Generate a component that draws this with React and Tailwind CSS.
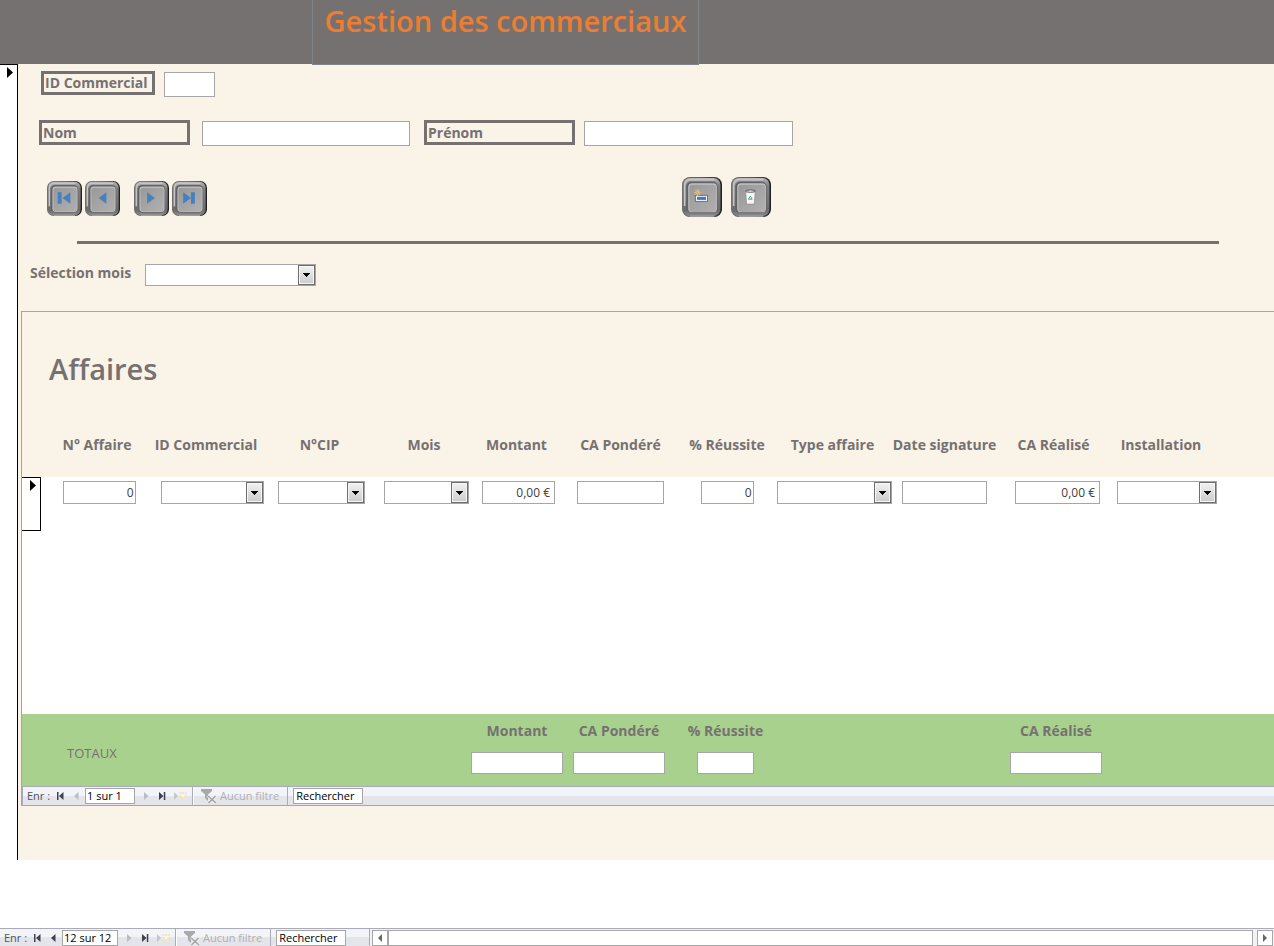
import { useId } from 'react';

const columns = [
  { name: 'N° Affaire', col: 'w-[116px]', field: 'w-[73px]', value: '0', head: 'pr-1' },
  { name: 'ID Commercial', col: 'w-[110px]', field: 'w-[103px]', select: true, head: 'pr-3' },
  { name: 'N°CIP', col: 'w-[109px]', field: 'w-[87px]', select: true, head: 'pr-1' },
  { name: 'Mois', col: 'w-[100px]', field: 'w-[85px]', select: true, head: 'pr-1' },
  { name: 'Montant', col: 'w-[85px]', field: 'w-[73px]', value: '0,00 €', pad: 'pr-1', head: 'pr-1', total: 'w-[92px]' },
  { name: 'CA Pondéré', col: 'w-[119px]', field: 'w-[87px]', value: '', total: 'w-[92px]' },
  { name: '% Réussite', col: 'w-[94px]', field: 'w-[53px]', value: '0', total: 'w-[57px]' },
  { name: 'Type affaire', col: 'w-[121px]', field: 'w-[115px]', select: true, head: 'pr-1' },
  { name: 'Date signature', col: 'w-[99px]', field: 'w-[85px]', value: '' },
  { name: 'CA Réalisé', col: 'w-[127px]', field: 'w-[85px]', value: '0,00 €', pad: 'pr-1', head: 'pr-2', total: 'w-[92px]' },
  { name: 'Installation', col: 'w-[92px]', field: 'w-[100px]', select: true, head: 'pr-3' },
];

function Combo({ id, label, className }) {
  return (
    <span className={`relative block shrink-0 ${className}`}>
      <select
        id={id}
        aria-label={label}
        className="block h-full w-full appearance-none border border-[#a6a6a6] bg-white pl-1 pr-5 text-xs text-[#404040] outline-none"
      >
        <option value=""></option>
      </select>
      <span className="pointer-events-none absolute inset-y-px right-px flex w-[17px] items-center justify-center border border-[#6e6e6e] bg-linear-to-b from-[#f2f2f2] to-[#cbcbcb] shadow-[inset_0_0_0_1px_#f6f6f6]">
        <svg width="7" height="4" viewBox="0 0 7 4" shapeRendering="crispEdges">
          <path d="M0 0h7v1h-1v1h-1v1h-1v1h-1v-1h-1v-1h-1v-1h-1z" fill="#000" />
        </svg>
      </span>
    </span>
  );
}

function MetalButton({ label, size, children }) {
  const id = useId();
  return (
    <button type="button" aria-label={label} className={`block shrink-0 ${size}`}>
      <svg viewBox="0 0 36 36" className="h-full w-full">
        <defs>
          <linearGradient id={`${id}a`} x1="0" y1="0" x2="1" y2="0">
            <stop offset="0" stopColor="#6f6f6f" />
            <stop offset="0.5" stopColor="#5a5a5a" />
            <stop offset="1" stopColor="#202020" />
          </linearGradient>
          <linearGradient id={`${id}b`} x1="0" y1="0" x2="0" y2="1">
            <stop offset="0" stopColor="#b9b9b9" />
            <stop offset="0.2" stopColor="#808080" />
            <stop offset="0.85" stopColor="#6c6c6c" />
            <stop offset="1" stopColor="#8c8c8c" />
          </linearGradient>
          <linearGradient id={`${id}c`} x1="0" y1="0" x2="1" y2="1">
            <stop offset="0" stopColor="#999999" />
            <stop offset="1" stopColor="#b0b0b0" />
          </linearGradient>
        </defs>
        <rect width="36" height="36" rx="7" fill={`url(#${id}a)`} />
        <rect x="1" y="0.8" width="33.6" height="34.4" rx="6.2" fill={`url(#${id}b)`} />
        <path d="M2.4 26V8Q2.400 2.400 8 2.400H29" fill="none" stroke="#c4c4c4" strokeWidth="1.500" />
        <path d="M7 35.300h22" stroke="#b0b0b0" strokeWidth="1" />
        <rect x="4" y="4" width="28" height="28.400" rx="4.500" fill="#626262" />
        <rect x="5.600" y="5.600" width="25.800" height="26.200" rx="3.500" fill="#c2c2c2" />
        <rect x="6.600" y="7" width="24" height="24.400" rx="2.500" fill={`url(#${id}c)`} />
        {children}
      </svg>
    </button>
  );
}

function NavIcon({ kind, off }) {
  const fill = off ? '#b9bcc2' : '#3c4250';
  return (
    <svg width="14" height="12" viewBox="0 0 14 12" className="mx-auto block">
      {kind === 'first' && <path d="M4 2h1.500v8H4zM10.500 2v8L6 6z" fill={fill} />}
      {kind === 'prev' && <path d="M9.500 2v8L5 6z" fill={fill} />}
      {kind === 'next' && <path d="M5 2v8l4.500-4z" fill={fill} />}
      {kind === 'last' && <path d="M4 2v8l4.500-4zM8.800 2h1.500v8H8.800z" fill={fill} />}
      {kind === 'new' && (
        <>
          <path d="M0 2v8l4-4z" fill="#c3c6cb" />
          <path d="M5.500 3h7M5.500 6h7M5.500 9h7" stroke="#f3e6b8" strokeWidth="2" strokeDasharray="1.800 0.800" />
          <path d="M8 5h2v2H8z" fill="#fdf8e4" />
        </>
      )}
    </svg>
  );
}

function NavButton({ kind, label, off, wide }) {
  return (
    <button type="button" aria-label={label} disabled={off} className={wide ? 'w-[22px]' : 'w-4'}>
      <NavIcon kind={kind} off={off} />
    </button>
  );
}

function RecordNav({ position, positionWidth, prevOff, className, children }) {
  return (
    <div className={`box-content flex items-stretch border-t border-[#a9abb8] bg-linear-to-b from-[#f3f4f7] from-50% to-[#e4e5ea] to-50% text-[11px] leading-4 text-[#4d5160] ${className}`}>
      <div className="flex items-center pl-1">
        <span className="w-[25px]">Enr :</span>
        <NavButton kind="first" label="Premier enregistrement" />
        <NavButton kind="prev" label="Enregistrement précédent" off={prevOff} />
        <input
          aria-label="Enregistrement actif"
          defaultValue={position}
          className={`mr-[3px] ml-px h-4 border border-[#a6a6a6] bg-white pb-px pl-px text-[11px] leading-3 text-black outline-none ${positionWidth}`}
        />
        <NavButton kind="next" label="Enregistrement suivant" off />
        <NavButton kind="last" label="Dernier enregistrement" />
        <NavButton kind="new" label="Nouvel enregistrement" off wide />
      </div>
      <button type="button" disabled className="flex items-center gap-[3px] border-x border-[#a9abb8] px-2 text-[#b0b0b0] shadow-[inset_1px_0_0_#fff]">
        <svg width="16" height="16" viewBox="0 0 16 16">
          <path d="M0 1h11v2L7 6.500V13L4 10V6.500L0 3z" fill="#a9a9a9" />
          <path d="M7 7.500l8 7.500M14.500 7.500L7.500 15" stroke="#f0f1f4" strokeWidth="3.500" />
          <path d="M7 8l8 7M14.500 8L7.500 15" stroke="#a5a5a5" strokeWidth="1.600" />
        </svg>
        Aucun filtre
      </button>
      <div className="flex items-center px-[5px]">
        <input
          aria-label="Rechercher"
          defaultValue="Rechercher"
          className="h-4 w-[70px] border border-[#a6a6a6] bg-white pb-px pl-0.5 text-[11px] leading-3 text-black outline-none"
        />
      </div>
      {children}
    </div>
  );
}

function Marker() {
  return (
    <svg width="6" height="11" viewBox="0 0 6 11" className="block">
      <path d="M0 0L6 5.500L0 11z" fill="#000" />
    </svg>
  );
}

function Affaires() {
  return (
    <section className="ml-[3px] border border-r-0 border-[#a6a6a6]">
      <h2 className="pt-9 pl-[27px] text-[29px] leading-[42px] font-semibold text-[#767171]">Affaires</h2>
      <table className="w-full table-fixed border-collapse">
        <colgroup>
          <col className="w-[19px]" />
          {columns.map((c) => (
            <col key={c.name} className={c.col} />
          ))}
          <col />
        </colgroup>
        <thead>
          <tr className="h-[87px] align-top text-sm leading-5 text-[#767171]">
            <td />
            {columns.map((c) => (
              <th key={c.name} className="pt-[45px] font-bold">
                <span className={`flex justify-center whitespace-nowrap ${c.head || ''}`}>{c.name}</span>
              </th>
            ))}
            <td />
          </tr>
        </thead>
        <tbody className="bg-white">
          <tr className="h-[54px] align-top">
            <td>
              <div className="h-[54px] border border-l-0 border-black pt-0.5 pl-2">
                <Marker />
              </div>
            </td>
            {columns.map((c) => (
              <td key={c.name} className="pt-1">
                <div className="flex justify-center">
                  {c.select ? (
                    <Combo label={c.name} className={`h-[23px] ${c.field}`} />
                  ) : (
                    <input
                      aria-label={c.name}
                      defaultValue={c.value}
                      className={`h-[23px] shrink-0 border border-[#a6a6a6] bg-white pb-px text-right text-xs text-[#404040] outline-none ${c.field} ${c.pad || 'pr-px'}`}
                    />
                  )}
                </div>
              </td>
            ))}
            <td />
          </tr>
          <tr className="h-[183px]">
            <td colSpan={columns.length + 2} />
          </tr>
        </tbody>
        <tfoot className="bg-[#a9d18e] text-sm leading-5 text-[#767171]">
          <tr className="h-[72px] align-top">
            <td />
            <th className="pt-[29px] pl-[26px] text-left text-[13px] leading-5 font-normal">TOTAUX</th>
            {columns.slice(1).map((c) => (
              <td key={c.name} className="pt-[7px]">
                {c.total && (
                  <label className="flex flex-col items-center gap-[11px] pr-[3px] font-bold whitespace-nowrap">
                    {c.name}
                    <input className={`block h-[22px] shrink-0 border border-[#a6a6a6] bg-white outline-none ${c.total}`} />
                  </label>
                )}
              </td>
            ))}
            <td />
          </tr>
        </tfoot>
      </table>
      <RecordNav position="1 sur 1" positionWidth="w-[50px]" prevOff className="h-[18px] border-l" />
    </section>
  );
}

const labelBox = 'border-3 border-[#767171] px-px text-sm font-bold whitespace-nowrap text-[#767171]';
const textBox = 'mt-px h-[25px] border border-[#a6a6a6] bg-white px-1 text-xs text-[#404040] outline-none';

export default function App() {
  return (
    <div className="flex min-h-screen flex-col bg-white font-['Open_Sans','Noto_Sans',sans-serif]">
      <header className="h-16 bg-[#767171]">
        <h1 className="relative ml-[312px] h-[65px] w-[387px] border border-t-0 border-[#808488] bg-[#767171] text-center text-[29px] leading-[42px] font-semibold whitespace-nowrap text-[#ed7d31]">
          Gestion des commerciaux
        </h1>
      </header>

      <main className="flex">
        <div className="w-[18px] shrink-0 border-t border-r border-black pt-0.5 pl-[7px]">
          <Marker />
        </div>

        <div className="min-w-0 flex-1 bg-[#faf3e8] pt-[7px] pb-[54px]">
          <div className="flex items-start pl-[23px]">
            <label htmlFor="idCommercial" className={`w-[114px] leading-[18px] ${labelBox}`}>ID Commercial</label>
            <input id="idCommercial" className={`ml-[9px] w-[51px] ${textBox}`} />
          </div>

          <div className="mt-[23px] flex items-start pl-[21px]">
            <label htmlFor="nom" className={`w-[151px] leading-[19px] ${labelBox}`}>Nom</label>
            <input id="nom" className={`ml-3 w-[208px] ${textBox}`} />
            <label htmlFor="prenom" className={`ml-3.5 w-[151px] leading-[19px] ${labelBox}`}>Prénom</label>
            <input id="prenom" className={`ml-[9px] w-[209px] ${textBox}`} />
          </div>

          {/* Navigation et actions */}
          <div className="mt-[31px] flex items-end pl-[29px]">
            <div className="flex gap-[3px] pb-px">
              <MetalButton label="Premier" size="size-[35px]">
                <path d="M11 11.500h4v12h-4zM24 11.500v12l-8-6z" fill="#4680bd" />
              </MetalButton>
              <MetalButton label="Précédent" size="size-[35px]">
                <path d="M22 11.500v12l-8-6z" fill="#4680bd" />
              </MetalButton>
            </div>
            <div className="ml-3.5 flex gap-[3px] pb-px">
              <MetalButton label="Suivant" size="size-[35px]">
                <path d="M13.500 11.500v12l8-6z" fill="#4680bd" />
              </MetalButton>
              <MetalButton label="Dernier" size="size-[35px]">
                <path d="M11.500 11.500v12l8-6zM19.500 11.500h4v12h-4z" fill="#4680bd" />
              </MetalButton>
            </div>
            <div className="ml-[475px] flex gap-[9px]">
              <MetalButton label="Ajouter un enregistrement" size="size-10">
                <rect x="12" y="16.500" width="11" height="5.400" fill="#fff" stroke="#5f6670" strokeWidth="0.800" />
                <rect x="13.400" y="17.800" width="8.200" height="2.800" fill="#3f7cc0" />
                <path d="M14 11v6M11 14h6M11.900 11.900l4.200 4.200M16.100 11.900l-4.200 4.200" stroke="#f2b76a" strokeWidth="1" />
                <circle cx="14" cy="14" r="1" fill="#b5b0a4" />
              </MetalButton>
              <MetalButton label="Supprimer l'enregistrement" size="size-10">
                <path d="M13.200 12.800h8.600l-0.800 11.600h-7z" fill="#f7f7f7" stroke="#888" strokeWidth="0.600" />
                <ellipse cx="17.500" cy="12.700" rx="4.400" ry="1" fill="#fff" stroke="#555" strokeWidth="0.900" />
                <path d="M17.400 17.200l1.700 2.800h-3.400z" fill="none" stroke="#5aa584" strokeWidth="0.900" strokeLinejoin="round" />
              </MetalButton>
            </div>
          </div>

          <hr className="mt-6 mr-[55px] ml-[59px] border-t-3 border-[#767171]" />

          <div className="mt-5 flex items-start pl-3">
            <label htmlFor="mois" className="w-[115px] text-sm leading-[18px] font-bold whitespace-nowrap text-[#767171]">Sélection mois</label>
            <Combo id="mois" className="h-[22px] w-[171px]" />
          </div>

          <div className="mt-[25px]">
            <Affaires />
          </div>
        </div>
      </main>

      <footer className="mt-auto">
        <RecordNav position="12 sur 12" positionWidth="w-[56px]" className="h-[17px]">
          <div className="ml-[18px] flex min-w-0 flex-1 items-center border-l border-[#a9abb8] bg-[#f2f2f2] pr-px pl-0.5">
            <button type="button" aria-label="Défiler à gauche" className="flex h-4 w-4 items-center justify-center border border-[#a6a6a6] bg-white">
              <svg width="4" height="8" viewBox="0 0 4 8"><path d="M4 0v8L0 4z" fill="#666" /></svg>
            </button>
            <div className="mr-1 h-4 flex-1 border border-[#a6a6a6] bg-white" />
            <button type="button" aria-label="Défiler à droite" className="flex h-4 w-4 items-center justify-center border border-[#a6a6a6] bg-white">
              <svg width="4" height="8" viewBox="0 0 4 8"><path d="M0 0v8l4-4z" fill="#666" /></svg>
            </button>
          </div>
        </RecordNav>
      </footer>
    </div>
  );
}
